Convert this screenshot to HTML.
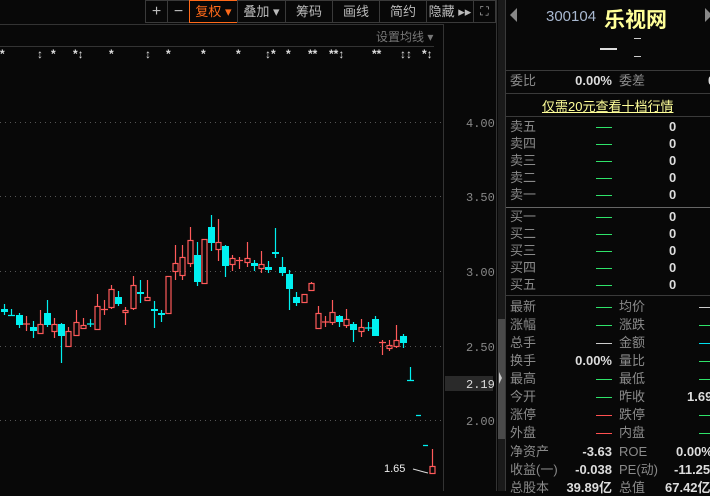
<!DOCTYPE html>
<html><head><meta charset="utf-8"><style>
*{margin:0;padding:0;box-sizing:border-box}
body{width:710px;height:491px;background:#080808;overflow:hidden;position:relative;font-family:"Liberation Sans","Noto Sans CJK SC",sans-serif;color:#888}
.a{position:absolute;white-space:nowrap}
.tb{position:absolute;top:0;height:23px;border:1px solid #3a3a3a;color:#bbb;font-size:13px;line-height:21px;text-align:center}
.r{position:absolute;left:510px;font-size:13px;color:#8a8a8a;white-space:nowrap;line-height:16px}
.v{position:absolute;font-size:13px;font-weight:bold;color:#ddd;text-align:right;white-space:nowrap;line-height:16px}
.g{position:absolute;height:1px;background:#2fe36a;width:16px}
.hl{position:absolute;left:506px;width:204px;height:1px;background:#3a3a3a}
</style></head><body>
<svg class="a" style="left:0;top:0" width="505" height="491">
<line x1="0" y1="24.5" x2="443" y2="24.5" stroke="#333"/>
<line x1="0" y1="46.5" x2="434" y2="46.5" stroke="#333"/>
<line x1="443.5" y1="24" x2="443.5" y2="491" stroke="#333"/>
<line x1="496.5" y1="0" x2="496.5" y2="491" stroke="#333"/>
<rect x="498" y="0" width="7" height="491" fill="#1a1a1a"/>
<rect x="498" y="319" width="7" height="120" fill="#4a4a4a"/>
<path d="M499 372 L502 378 L499 384Z" fill="#ccc"/>
<g stroke="#555" stroke-dasharray="1,4">
<line x1="0" y1="122.5" x2="445" y2="122.5"/><line x1="0" y1="196.5" x2="445" y2="196.5"/><line x1="0" y1="271.5" x2="445" y2="271.5"/><line x1="0" y1="346.5" x2="445" y2="346.5"/><line x1="0" y1="420.5" x2="445" y2="420.5"/></g>
<g fill="#888" font-family="Liberation Mono,monospace" font-size="12"><text x="466" y="127">4.00</text><text x="466" y="201">3.50</text><text x="466" y="276">3.00</text><text x="466" y="351">2.50</text><text x="466" y="425">2.00</text></g>
<rect x="445" y="376" width="48" height="15" fill="#2a2a2a"/>
<text x="466" y="388" fill="#ddd" font-family="Liberation Mono,monospace" font-size="12">2.19</text>
<path fill="none" stroke="#ff5a5a" stroke-width="1.2" d="M26.5 316V331M23 324H30M40.5 310V324M40.5 333V333M54.5 318V324M54.5 331V338M68.5 327V331M76.5 310V322M83.5 318V325M83.5 328V329M97.5 294V306M104.5 300V315M101 309.5H108M111.5 285V289M111.5 307V309M125.5 307V310M125.5 312V325M133.5 276V285M133.5 308V310M147.5 280V297M175.5 245V263M175.5 271V280M182.5 245V257M182.5 275V280M190.5 227V240M190.5 263V267M218.5 219V242M218.5 249V261M232.5 255V258M232.5 264V271M239.5 257V269M236 260.5H243M247.5 242V258M247.5 262V267M261.5 251V264M261.5 268V273M311.5 282V283M318.5 306V313M325.5 316V327M322 322H329M332.5 300V312M332.5 322V325M346.5 309V319M346.5 325V328M361.5 319V327M361.5 331V337M382.5 340V355M379 342.5H386M389.5 340V345M389.5 348V351M396.5 325V340M396.5 346V348M432.5 449V466"/>
<g fill="none" stroke="#ff5a5a" stroke-width="1.2">
<rect x="38" y="324.5" width="5" height="9"/><rect x="52" y="324.5" width="5" height="7"/><rect x="66" y="331.5" width="5" height="15"/><rect x="74" y="322.5" width="5" height="13"/><rect x="81" y="325.5" width="5" height="3"/><rect x="95" y="306.5" width="5" height="23"/><rect x="109" y="289.5" width="5" height="18"/><rect x="123" y="310.5" width="5" height="2"/><rect x="131" y="285.5" width="5" height="23"/><rect x="145" y="297.5" width="5" height="3"/><rect x="166" y="276.5" width="5" height="37"/><rect x="173" y="263.5" width="5" height="8"/><rect x="180" y="257.5" width="5" height="18"/><rect x="188" y="240.5" width="5" height="23"/><rect x="202" y="239.5" width="5" height="44"/><rect x="216" y="242.5" width="5" height="7"/><rect x="230" y="258.5" width="5" height="6"/><rect x="245" y="258.5" width="5" height="4"/><rect x="259" y="264.5" width="5" height="4"/><rect x="302" y="294.5" width="5" height="8"/><rect x="309" y="283.5" width="5" height="7"/><rect x="316" y="313.5" width="5" height="15"/><rect x="330" y="312.5" width="5" height="10"/><rect x="344" y="319.5" width="5" height="6"/><rect x="359" y="327.5" width="5" height="4"/><rect x="387" y="345.5" width="5" height="3"/><rect x="394" y="340.5" width="5" height="6"/><rect x="430" y="466.5" width="5" height="7"/></g>
<path fill="none" stroke="#00f0f0" stroke-width="1.2" d="M4.5 304V315M11.5 309V316M8 315.5H15M19.5 313V328M33.5 321V338M47.5 300V327M61.5 323V363M90.5 319V327M87 324H94M118.5 291V306M140.5 280V303M154.5 301V328M161.5 310V322M197.5 242V286M211.5 215V251M225.5 245V277M254.5 260V271M268.5 261V273M275.5 228V258M282.5 257V276M289.5 270V310M296.5 292V306M339.5 315V327M353.5 322V342M368.5 322V331M365 328H372M375.5 316V336M403.5 334V348M410.5 367V381M407 380.5H414M416 415.5H421M423 445.5H428"/>
<g fill="#00f0f0">
<rect x="1" y="309" width="7" height="3"/><rect x="16" y="315" width="7" height="10"/><rect x="30" y="327" width="7" height="4"/><rect x="44" y="313" width="7" height="12"/><rect x="58" y="324" width="7" height="12"/><rect x="115" y="297" width="7" height="7"/><rect x="137" y="292" width="7" height="2"/><rect x="151" y="309" width="7" height="2"/><rect x="158" y="313" width="7" height="2"/><rect x="194" y="255" width="7" height="27"/><rect x="208" y="227" width="7" height="16"/><rect x="222" y="246" width="7" height="20"/><rect x="251" y="263" width="7" height="3"/><rect x="265" y="267" width="7" height="3"/><rect x="272" y="252" width="7" height="2"/><rect x="279" y="267" width="7" height="6"/><rect x="286" y="274" width="7" height="15"/><rect x="293" y="297" width="7" height="6"/><rect x="336" y="316" width="7" height="6"/><rect x="350" y="324" width="7" height="6"/><rect x="372" y="319" width="7" height="17"/><rect x="400" y="336" width="7" height="7"/></g>
<text x="384" y="472" fill="#eee" font-size="11">1.65</text>
<path d="M413 469 L424 472 L428 473" stroke="#ddd" fill="none"/>
<g fill="#ddd" font-size="12" font-weight="bold"><text x="0" y="58">*</text><text x="37" y="58">↕</text><text x="51" y="58">*</text><text x="73" y="58">*↕</text><text x="109" y="58">*</text><text x="145" y="58">↕</text><text x="166" y="58">*</text><text x="201" y="58">*</text><text x="236" y="58">*</text><text x="265" y="58">↕*</text><text x="286" y="58">*</text><text x="308" y="58">**</text><text x="329" y="58">**↕</text><text x="372" y="58">**</text><text x="400" y="58">↕↕</text><text x="422" y="58">*↕</text></g>
<text x="376" y="41" fill="#777" font-size="12" font-family="Liberation Sans,Noto Sans CJK SC,sans-serif">设置均线 ▾</text>
</svg>
<div class="tb" style="left:145px;width:23px;font-size:16px">+</div>
<div class="tb" style="left:167px;width:23px;font-size:16px">−</div>
<div class="tb" style="left:189px;width:49px;border-color:#ff6a1a;color:#ff6a1a">复权 ▾</div>
<div class="tb" style="left:237px;width:49px">叠加 ▾</div>
<div class="tb" style="left:285px;width:48px">筹码</div>
<div class="tb" style="left:332px;width:48px">画线</div>
<div class="tb" style="left:379px;width:48px">简约</div>
<div class="tb" style="left:426px;width:48px">隐藏 ▸▸</div>
<div class="tb" style="left:473px;width:23px;font-size:12px">⛶</div>
<div class="a" style="left:505px;top:0;width:1px;height:491px;background:#3a3a3a"></div>
<div class="a" style="left:510px;top:8px;width:0;height:0;border-top:7px solid transparent;border-bottom:7px solid transparent;border-right:7px solid #888"></div>
<div class="a" style="left:705px;top:8px;width:0;height:0;border-top:7px solid transparent;border-bottom:7px solid transparent;border-left:7px solid #888"></div>
<div class="a" style="left:546px;top:8px;font-size:15px;color:#a8b8d0">300104</div>
<div class="a" style="left:604px;top:4px;font-size:21px;font-weight:bold;color:#ffff99">乐视网</div>
<div class="a" style="left:600px;top:48px;width:17px;height:2px;background:#ddd"></div>
<div class="a" style="left:634px;top:38px;width:7px;height:1px;background:#ccc"></div>
<div class="a" style="left:634px;top:56px;width:7px;height:1px;background:#ccc"></div>
<div class="hl" style="top:70px"></div>
<div class="r" style="top:73px">委比</div><div class="v" style="right:98px;top:73px">0.00%</div><div class="r" style="left:619px;top:73px">委差</div><div class="v" style="left:708px;top:73px">0</div>
<div class="hl" style="top:93px"></div>
<div class="a" style="left:542px;top:96px;font-size:13px;color:#ffff99;text-decoration:underline">仅需20元查看十档行情</div>
<div class="hl" style="top:116px"></div>
<div class="r" style="top:119px">卖五</div><div class="r" style="top:136px">卖四</div><div class="r" style="top:153px">卖三</div><div class="r" style="top:170px">卖二</div><div class="r" style="top:187px">卖一</div>
<div class="hl" style="top:207px;background:#666"></div>
<div class="r" style="top:209px">买一</div><div class="r" style="top:226px">买二</div><div class="r" style="top:243px">买三</div><div class="r" style="top:260px">买四</div><div class="r" style="top:277px">买五</div>
<div class="g" style="left:596px;top:127px"></div><div class="g" style="left:596px;top:144px"></div><div class="g" style="left:596px;top:161px"></div><div class="g" style="left:596px;top:178px"></div><div class="g" style="left:596px;top:195px"></div>
<div class="g" style="left:596px;top:217px"></div><div class="g" style="left:596px;top:234px"></div><div class="g" style="left:596px;top:251px"></div><div class="g" style="left:596px;top:268px"></div><div class="g" style="left:596px;top:285px"></div>
<div class="v" style="left:669px;top:119px;text-align:left">0</div><div class="v" style="left:669px;top:136px;text-align:left">0</div><div class="v" style="left:669px;top:153px;text-align:left">0</div><div class="v" style="left:669px;top:170px;text-align:left">0</div><div class="v" style="left:669px;top:187px;text-align:left">0</div>
<div class="v" style="left:669px;top:209px;text-align:left">0</div><div class="v" style="left:669px;top:226px;text-align:left">0</div><div class="v" style="left:669px;top:243px;text-align:left">0</div><div class="v" style="left:669px;top:260px;text-align:left">0</div><div class="v" style="left:669px;top:277px;text-align:left">0</div>
<div class="hl" style="top:295px"></div>
<div class="r" style="top:299px">最新</div><div class="r" style="top:317px">涨幅</div><div class="r" style="top:335px">总手</div><div class="r" style="top:353px">换手</div><div class="r" style="top:371px">最高</div><div class="r" style="top:389px">今开</div><div class="r" style="top:407px">涨停</div><div class="r" style="top:425px">外盘</div><div class="r" style="top:444px">净资产</div><div class="r" style="top:462px">收益(一)</div><div class="r" style="top:480px">总股本</div>
<div class="r" style="left:619px;top:299px">均价</div><div class="r" style="left:619px;top:317px">涨跌</div><div class="r" style="left:619px;top:335px">金额</div><div class="r" style="left:619px;top:353px">量比</div><div class="r" style="left:619px;top:371px">最低</div><div class="r" style="left:619px;top:389px">昨收</div><div class="r" style="left:619px;top:407px">跌停</div><div class="r" style="left:619px;top:425px">内盘</div><div class="r" style="left:619px;top:444px">ROE</div><div class="r" style="left:619px;top:462px">PE(动)</div><div class="r" style="left:619px;top:480px">总值</div>
<div class="g" style="left:596px;top:307px"></div><div class="g" style="left:596px;top:325px"></div><div class="g" style="left:596px;top:343px;background:#ccc"></div><div class="g" style="left:596px;top:379px"></div><div class="g" style="left:596px;top:397px"></div><div class="g" style="left:596px;top:415px;background:#ff5050"></div><div class="g" style="left:596px;top:433px;background:#ff5050"></div>
<div class="g" style="left:699px;top:307px;background:#ccc"></div><div class="g" style="left:699px;top:325px"></div><div class="g" style="left:699px;top:343px;background:#00e0f0"></div><div class="g" style="left:699px;top:361px"></div><div class="g" style="left:699px;top:379px"></div><div class="g" style="left:699px;top:415px"></div><div class="g" style="left:699px;top:433px"></div>
<div class="v" style="right:98px;top:353px">0.00%</div><div class="v" style="right:98px;top:444px">-3.63</div><div class="v" style="right:98px;top:462px">-0.038</div><div class="v" style="right:98px;top:480px">39.89亿</div>
<div class="v" style="left:687px;top:389px;text-align:left">1.69</div><div class="v" style="left:676px;top:444px;text-align:left">0.00%</div><div class="v" style="left:674px;top:462px;text-align:left">-11.25</div><div class="v" style="left:665px;top:480px;text-align:left">67.42亿</div>
</body></html>
